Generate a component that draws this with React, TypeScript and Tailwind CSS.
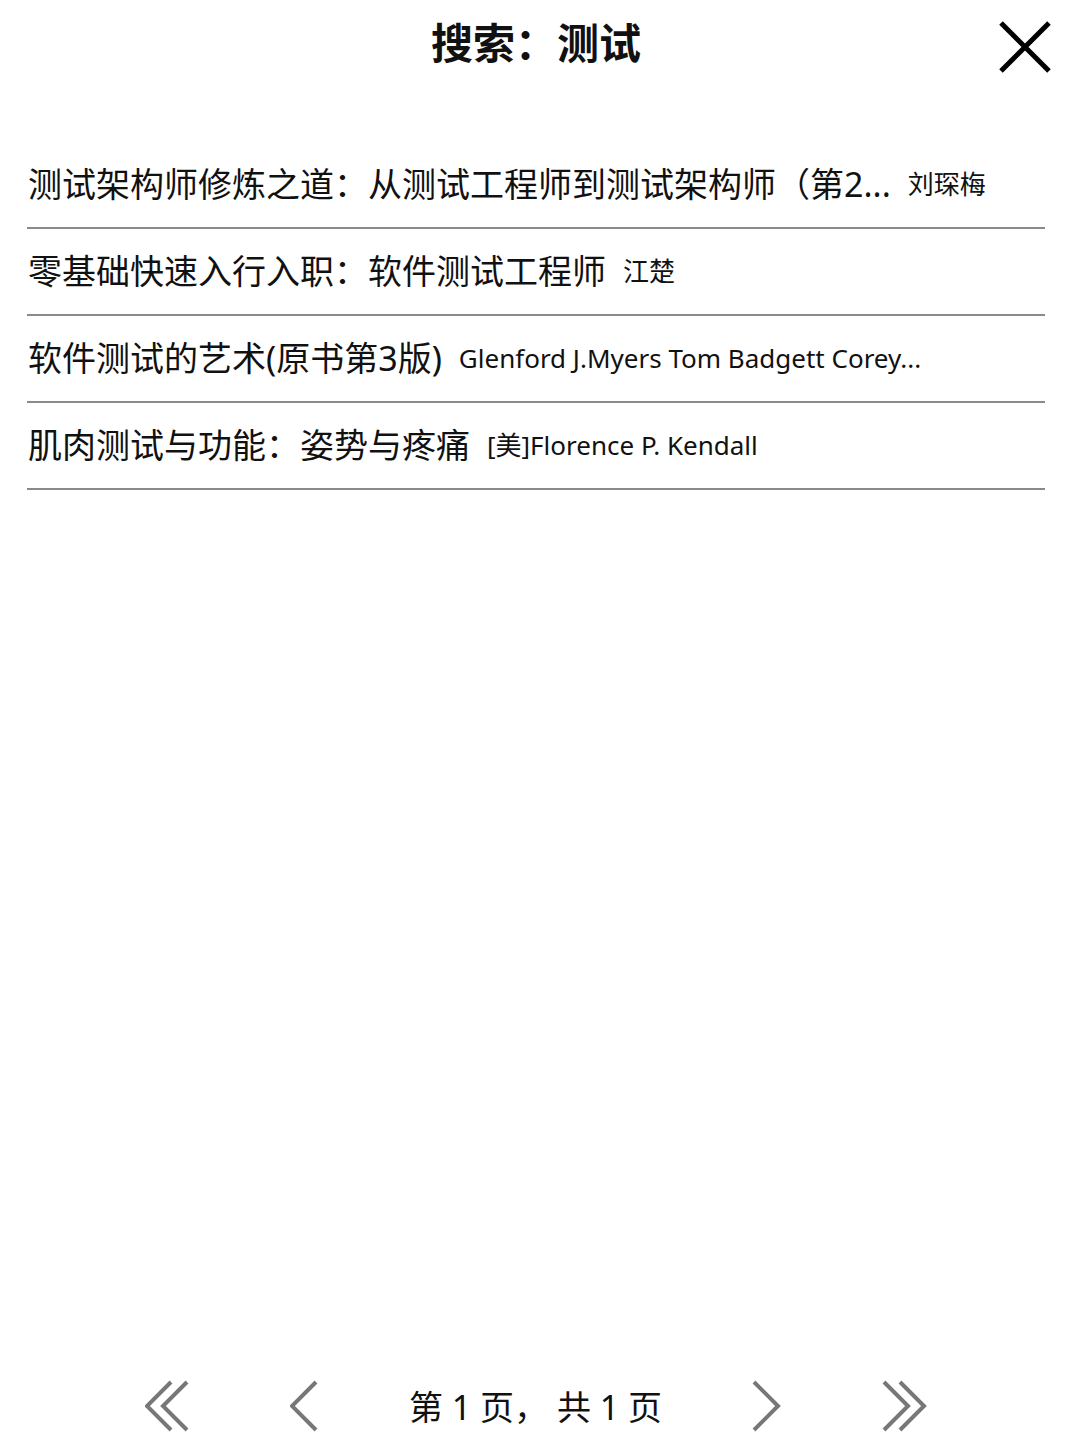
const books = [
  {
    title: "测试架构师修炼之道：从测试工程师到测试架构师（第2...",
    author: "刘琛梅",
  },
  { title: "零基础快速入行入职：软件测试工程师", author: "江楚" },
  {
    title: "软件测试的艺术(原书第3版)",
    author: "Glenford J.Myers Tom Badgett Corey...",
  },
  { title: "肌肉测试与功能：姿势与疼痛", author: "[美]Florence P. Kendall" },
];

const font = { fontFamily: '"Noto Sans", "Noto Sans CJK SC", sans-serif' };

const Chevron = ({ double, dir }: { double?: boolean; dir: "left" | "right" }) => {
  const w = double ? 46 : 30;
  const pts = (x: number) =>
    dir === "left"
      ? `${x + 26},2 ${x + 2},26 ${x + 26},50`
      : `${x + 2},2 ${x + 26},26 ${x + 2},50`;
  return (
    <svg width={w} height={52} viewBox={`0 0 ${w} 52`} fill="none">
      <polyline points={pts(0)} stroke="#777777" strokeWidth={4} />
      {double && <polyline points={pts(16)} stroke="#777777" strokeWidth={4} />}
    </svg>
  );
};

const App = () => {
  return (
    <div
      className="min-h-[1448px] w-full bg-white text-[#111] flex flex-col"
      style={font}
    >
      {/* Header */}
      <div className="relative h-[86px] flex items-center justify-center">
        <h1 className="text-[42px] font-bold leading-none">搜索：测试</h1>
        <button className="absolute right-[20px] top-[20px] w-[54px] h-[54px] flex items-center justify-center">
          <svg width="54" height="54" viewBox="0 0 54 54">
            <path d="M3 3 L51 51 M51 3 L3 51" stroke="#000" strokeWidth={5} />
          </svg>
        </button>
      </div>

      {/* Results */}
      <div className="mt-[56px] px-[27px]">
        {books.map((b) => (
          <div
            key={b.title}
            className="h-[87px] border-b-2 border-[#8a8a8a] flex items-center gap-[17px] pb-[2px] whitespace-nowrap overflow-hidden"
          >
            <span className="text-[34px] leading-none shrink-0 pl-[1px]">
              {b.title}
            </span>
            <span className="text-[26px] leading-none">{b.author}</span>
          </div>
        ))}
      </div>

      <div className="flex-1" />

      {/* Pagination */}
      <div className="h-[80px] flex items-start justify-center pt-[12px]">
        <Chevron double dir="left" />
        <div className="w-[99px]" />
        <Chevron dir="left" />
        <div className="w-[88px]" />
        <span className="text-[34px] leading-[54px] w-[256px] text-center whitespace-pre">
          第 1 页， 共 1 页
        </span>
        <div className="w-[88px]" />
        <Chevron dir="right" />
        <div className="w-[100px]" />
        <Chevron double dir="right" />
      </div>
    </div>
  );
};

export default App;
